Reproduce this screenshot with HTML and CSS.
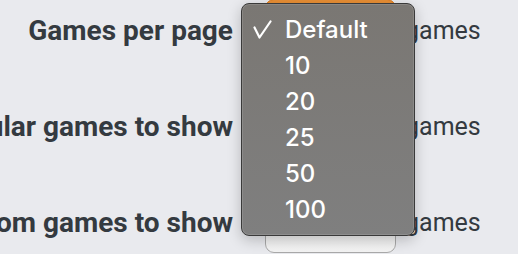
FILE: index.html
```html
<!DOCTYPE html>
<html>
<head>
<meta charset="utf-8">
<link rel="stylesheet" href="styles.css">
</head>
<body>
<div class="page">
  <form class="settings">
    <div class="row">
      <label class="label">Games per page</label>
      <div class="select select-focus"></div>
      <span class="suffix">games</span>
    </div>
    <div class="row">
      <label class="label">Popular games to show</label>
      <div class="select"></div>
      <span class="suffix">games</span>
    </div>
    <div class="row">
      <label class="label">Random games to show</label>
      <div class="select"></div>
      <span class="suffix">games</span>
    </div>
  </form>
  <ul class="menu">
    <li class="item checked"><svg class="check" width="20" height="19" viewBox="0 0 20 19"><polyline points="1.5,7.5 6.5,17.5 17.5,1.5" fill="none" stroke="#fff" stroke-width="2.2" stroke-linecap="round" stroke-linejoin="round"/></svg>Default</li>
    <li class="item">10</li>
    <li class="item">20</li>
    <li class="item">25</li>
    <li class="item">50</li>
    <li class="item">100</li>
  </ul>
</div>
</body>
</html>
```
FILE: styles.css
```css
html, body {
  margin: 0;
  padding: 0;
  width: 518px;
  height: 254px;
  overflow: hidden;
  background: #e9eaee;
}
.page {
  position: relative;
  width: 518px;
  height: 254px;
  overflow: hidden;
  font-family: Roboto, "Liberation Sans", sans-serif;
  color: #343a40;
}
.settings {
  margin: -18px 0 0 0;
  display: flex;
  flex-direction: column;
}
.row {
  display: flex;
  align-items: center;
  height: 96px;
}
.label {
  width: 233px;
  flex: none;
  display: flex;
  justify-content: flex-end;
  white-space: nowrap;
  font-weight: 700;
  font-size: 28px;
  color: #343a40;
}
.select {
  flex: none;
  width: 131px;
  height: 62px;
  margin-left: 32px;
  box-sizing: border-box;
  border: 1px solid #a9a9a9;
  border-radius: 9px;
  background: linear-gradient(#ececec, #f3f3f3);
}
.select-focus {
  background: #e88f35;
  border-color: #d97a1f;
}
.suffix {
  margin-left: 9px;
  font-size: 25px;
  color: #343a40;
}
.menu {
  position: absolute;
  left: 241px;
  top: 3px;
  width: 174px;
  height: 233px;
  box-sizing: border-box;
  margin: 0;
  padding: 8px 0 0 0;
  list-style: none;
  border: 1px solid #3a3a3a;
  border-radius: 8px;
  background: linear-gradient(#7a7773, #7f7f7f);
  box-shadow: inset 0 0 0 1px rgba(255,255,255,0.12), 0 4px 14px rgba(0,0,0,0.22);
  font-family: Inter, Roboto, sans-serif;
  font-weight: 500;
  font-size: 24px;
  color: #ffffff;
}
.item {
  height: 36px;
  line-height: 36px;
  padding-left: 43px;
  display: flex;
  align-items: center;
}
.checked {
  padding-left: 11px;
}
.check {
  flex: none;
  margin-right: 12px;
  margin-top: -2px;
}
```
